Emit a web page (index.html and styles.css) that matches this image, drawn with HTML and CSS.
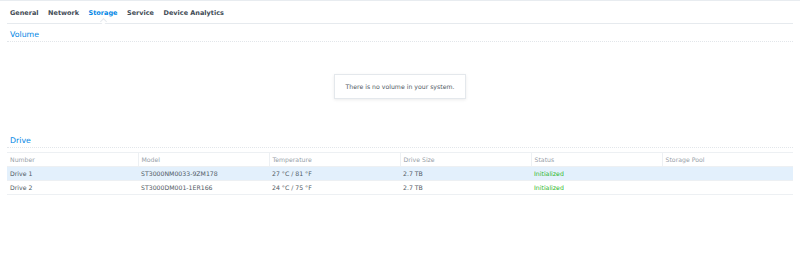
FILE: index.html
```html
<!DOCTYPE html>
<html lang="en">
<head>
    <meta charset="UTF-8">
    <title>Storage</title>
    <link rel="stylesheet" href="styles.css">
</head>
<body>
    <div class="panel">
        <nav class="tabs">
            <span class="tab">General</span>
            <span class="tab">Network</span>
            <span class="tab active">Storage</span>
            <span class="tab">Service</span>
            <span class="tab">Device Analytics</span>
        </nav>

        <h2 class="section-title">Volume</h2>
        <div class="empty-area">
            <div class="empty-box">There is no volume in your system.</div>
        </div>

        <h2 class="section-title">Drive</h2>
        <table class="grid">
            <thead>
                <tr>
                    <th>Number</th>
                    <th>Model</th>
                    <th>Temperature</th>
                    <th>Drive Size</th>
                    <th>Status</th>
                    <th>Storage Pool</th>
                </tr>
            </thead>
            <tbody>
                <tr class="selected">
                    <td>Drive 1</td>
                    <td>ST3000NM0033-9ZM178</td>
                    <td>27 °C / 81 °F</td>
                    <td>2.7 TB</td>
                    <td class="ok">Initialized</td>
                    <td></td>
                </tr>
                <tr>
                    <td>Drive 2</td>
                    <td>ST3000DM001-1ER166</td>
                    <td>24 °C / 75 °F</td>
                    <td>2.7 TB</td>
                    <td class="ok">Initialized</td>
                    <td></td>
                </tr>
            </tbody>
        </table>
    </div>
</body>
</html>
```

FILE: styles.css
```css
body {
    margin: 0;
    background: #fff;
    font-family: "DejaVu Sans", Verdana, sans-serif;
    font-size: 6.2px;
    color: #505a64;
}
.panel {
    border-top: 1px solid #e8ecf0;
    padding: 0 7px;
}
.tabs {
    display: flex;
    gap: 9.5px;
    height: 21px;
    align-items: center;
    padding: 1px 3px 0;
    border-bottom: 1px solid #e6eaee;
    font-size: 6.5px;
}
.tab {
    font-weight: bold;
    color: #414b55;
}
.tab.active {
    color: #0086e5;
    position: relative;
}
.tab.active::after {
    content: "";
    position: absolute;
    left: 50%;
    bottom: -7px;
    width: 4px;
    height: 4px;
    margin-left: -2px;
    background: #fff;
    border-left: 1px solid #e6eaee;
    border-top: 1px solid #e6eaee;
    transform: rotate(45deg);
}
.section-title {
    margin: 0;
    font-size: 7.8px;
    font-weight: normal;
    color: #0086e5;
    padding: 6px 3px 2px;
    border-bottom: 1px dotted #e2e6ea;
}
.empty-area {
    height: 88px;
    display: flex;
    justify-content: center;
    padding-top: 32px;
    box-sizing: border-box;
}
.empty-box {
    width: 130px;
    height: 23px;
    display: flex;
    align-items: center;
    justify-content: center;
    border: 1px solid #e4e8ec;
    box-shadow: 0 1px 3px rgba(0, 0, 0, 0.08);
    color: #505a64;
    align-self: flex-start;
}
.grid {
    width: 786px;
    margin-top: 4px;
    border-collapse: collapse;
    table-layout: fixed;
}
.grid th, .grid td {
    height: 14px;
    box-sizing: border-box;
    padding: 0 3px;
    text-align: left;
    font-weight: normal;
    border-bottom: 1px solid #edf0f3;
    white-space: nowrap;
}
.grid th {
    color: #97a0a8;
    border-top: 1px solid #edf0f3;
    border-right: 1px solid #edf0f3;
}
.grid th:last-child {
    border-right: none;
}
.grid tr.selected td {
    background: #e3f0fc;
}
.grid td.ok {
    color: #2db82d;
}
```
